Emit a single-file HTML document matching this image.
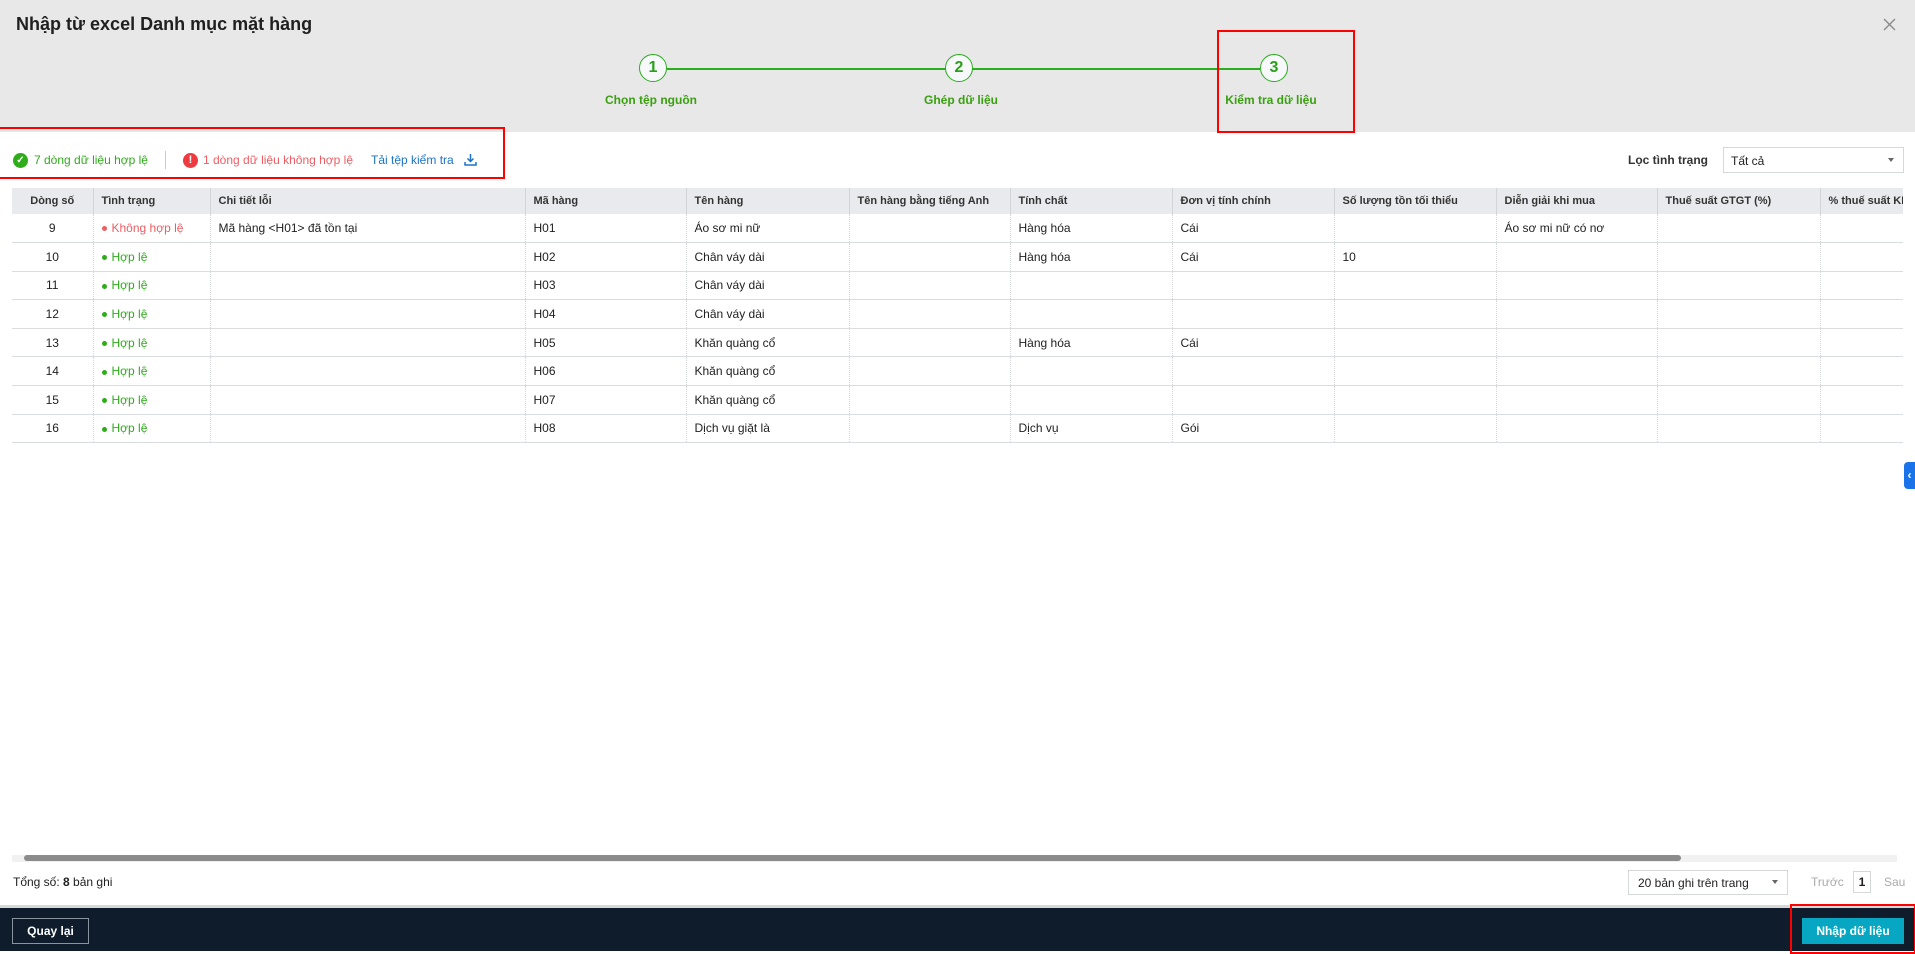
<!DOCTYPE html>
<html><head><meta charset="utf-8"><style>
*{box-sizing:border-box;margin:0;padding:0}
body{width:1915px;height:951px;overflow:hidden;background:#fff;font-family:"Liberation Sans",sans-serif;font-size:12px;color:#212121;position:relative}
.abs{position:absolute}
.hdr{left:0;top:0;width:1915px;height:132px;background:#e8e8e8}
.title{left:16px;top:14px;font-size:18px;font-weight:bold;color:#1f1f1f}
.circ{width:28px;height:28px;border:1.5px solid #2cac1f;border-radius:50%;background:#f6f8fa;color:#2aa01a;font-weight:bold;font-size:16px;text-align:center;line-height:25px}
.lbl{color:#3aa010;font-weight:bold;font-size:12px;white-space:nowrap;transform:translateX(-50%)}
.red{border:2.5px solid #f00}
table{border-collapse:collapse;table-layout:fixed}
th{background:#e9eaed;height:26px;font-size:11px;font-weight:bold;color:#333;text-align:left;padding-left:8px;border-left:1px solid #d2d4d8;white-space:nowrap;overflow:hidden}
td{height:28.6px;padding-left:8px;border-left:1px dotted #d5d7db;border-bottom:1px solid #d9dde2;white-space:nowrap;overflow:hidden;font-size:12px}
th:first-child,td:first-child{border-left:none;text-align:center;padding-left:0}
.ok{color:#2eac1a}.ng{color:#ee5d63}
.dot{display:inline-block;width:5px;height:5px;border-radius:50%;margin-right:5px;vertical-align:middle;background:currentColor}
</style></head><body>
<div class="abs hdr"></div>
<div class="abs title">Nhập từ excel Danh mục mặt hàng</div>
<svg class="abs" style="left:1883px;top:18px" width="13" height="13"><path d="M1 1L12 12M12 1L1 12" stroke="#888" stroke-width="1.3"/></svg>
<div class="abs" style="left:667px;top:68px;width:593px;height:1.5px;background:#2cac1f"></div>
<div class="abs circ" style="left:639px;top:54px">1</div>
<div class="abs circ" style="left:945px;top:54px">2</div>
<div class="abs circ" style="left:1260px;top:54px">3</div>
<div class="abs lbl" style="left:651px;top:93px">Chọn tệp nguồn</div>
<div class="abs lbl" style="left:961px;top:93px">Ghép dữ liệu</div>
<div class="abs lbl" style="left:1271px;top:93px">Kiểm tra dữ liệu</div>
<div class="abs red" style="left:1217px;top:30px;width:138px;height:103px"></div>
<div class="abs red" style="left:-3px;top:127px;width:508px;height:52px"></div>
<div class="abs" style="left:13px;top:153px;width:15px;height:15px;border-radius:50%;background:#2eac1a;color:#fff;font-size:10px;text-align:center;line-height:15px;font-weight:bold">✓</div>
<div class="abs ok" style="left:34px;top:153px">7 dòng dữ liệu hợp lệ</div>
<div class="abs" style="left:165px;top:151px;width:1px;height:18px;background:#ccc"></div>
<div class="abs" style="left:183px;top:153px;width:15px;height:15px;border-radius:50%;background:#ee3b3f;color:#fff;font-size:11px;text-align:center;line-height:15px;font-weight:bold">!</div>
<div class="abs ng" style="left:203px;top:153px">1 dòng dữ liệu không hợp lệ</div>
<div class="abs" style="left:371px;top:153px;color:#1a73c7">Tải tệp kiểm tra</div>
<svg class="abs" style="left:464px;top:153px" width="13" height="13"><path d="M6.5 1V8M3.5 5.5L6.5 8.5 9.5 5.5M1 9V12H12V9" stroke="#1a73c7" stroke-width="1.5" fill="none"/></svg>
<div class="abs" style="left:1628px;top:153px;font-weight:bold;color:#333">Lọc tình trạng</div>
<div class="abs" style="left:1723px;top:147px;width:181px;height:26px;border:1px solid #d5d7da;background:#fff;padding:6px 7px">Tất cả</div>
<div class="abs" style="left:1888px;top:158px;border-left:3.5px solid transparent;border-right:3.5px solid transparent;border-top:4px solid #666"></div>
<div class="abs" style="left:12px;top:188px;width:1891px;overflow:hidden">
<table style="width:2050px">
<colgroup><col style="width:81px"><col style="width:117px"><col style="width:315px"><col style="width:161px"><col style="width:163px"><col style="width:161px"><col style="width:162px"><col style="width:162px"><col style="width:162px"><col style="width:161px"><col style="width:163px"><col style="width:242px"></colgroup>
<tr><th>Dòng số</th><th>Tình trạng</th><th>Chi tiết lỗi</th><th>Mã hàng</th><th>Tên hàng</th><th>Tên hàng bằng tiếng Anh</th><th>Tính chất</th><th>Đơn vị tính chính</th><th>Số lượng tồn tối thiểu</th><th>Diễn giải khi mua</th><th>Thuế suất GTGT (%)</th><th>% thuế suất KHAC</th></tr>
<tr><td>9</td><td class="ng"><span class="dot"></span>Không hợp lệ</td><td>Mã hàng &lt;H01&gt; đã tồn tại</td><td>H01</td><td>Áo sơ mi nữ</td><td></td><td>Hàng hóa</td><td>Cái</td><td></td><td>Áo sơ mi nữ có nơ</td><td></td><td></td></tr>
<tr><td>10</td><td class="ok"><span class="dot"></span>Hợp lệ</td><td></td><td>H02</td><td>Chân váy dài</td><td></td><td>Hàng hóa</td><td>Cái</td><td>10</td><td></td><td></td><td></td></tr>
<tr><td>11</td><td class="ok"><span class="dot"></span>Hợp lệ</td><td></td><td>H03</td><td>Chân váy dài</td><td></td><td></td><td></td><td></td><td></td><td></td><td></td></tr>
<tr><td>12</td><td class="ok"><span class="dot"></span>Hợp lệ</td><td></td><td>H04</td><td>Chân váy dài</td><td></td><td></td><td></td><td></td><td></td><td></td><td></td></tr>
<tr><td>13</td><td class="ok"><span class="dot"></span>Hợp lệ</td><td></td><td>H05</td><td>Khăn quàng cổ</td><td></td><td>Hàng hóa</td><td>Cái</td><td></td><td></td><td></td><td></td></tr>
<tr><td>14</td><td class="ok"><span class="dot"></span>Hợp lệ</td><td></td><td>H06</td><td>Khăn quàng cổ</td><td></td><td></td><td></td><td></td><td></td><td></td><td></td></tr>
<tr><td>15</td><td class="ok"><span class="dot"></span>Hợp lệ</td><td></td><td>H07</td><td>Khăn quàng cổ</td><td></td><td></td><td></td><td></td><td></td><td></td><td></td></tr>
<tr><td>16</td><td class="ok"><span class="dot"></span>Hợp lệ</td><td></td><td>H08</td><td>Dịch vụ giặt là</td><td></td><td>Dịch vụ</td><td>Gói</td><td></td><td></td><td></td><td></td></tr>
</table></div>
<div class="abs" style="left:1904px;top:462px;width:11px;height:27px;background:#1a73e8;border-radius:4px 0 0 4px;color:#fff;font-size:12px;line-height:27px;text-align:center;font-weight:bold">‹</div>
<div class="abs" style="left:12px;top:855px;width:1885px;height:7px;background:#f1f1f1"></div>
<div class="abs" style="left:24px;top:855px;width:1657px;height:6px;background:#8b8b8b;border-radius:3px"></div>
<div class="abs" style="left:13px;top:875px">Tổng số: <b>8</b> bản ghi</div>
<div class="abs" style="left:1628px;top:870px;width:160px;height:25px;border:1px solid #d5d7da;padding:5px 9px">20 bản ghi trên trang</div>
<div class="abs" style="left:1772px;top:880px;border-left:3.5px solid transparent;border-right:3.5px solid transparent;border-top:4px solid #666"></div>
<div class="abs" style="left:1811px;top:875px;color:#aaa">Trước</div>
<div class="abs" style="left:1853px;top:871px;width:18px;height:22px;border:1px solid #d5d7da;text-align:center;line-height:20px;font-weight:bold">1</div>
<div class="abs" style="left:1884px;top:875px;color:#aaa">Sau</div>
<div class="abs" style="left:0;top:905px;width:1915px;height:3px;background:#d8d8d8"></div>
<div class="abs" style="left:0;top:908px;width:1915px;height:43px;background:#0e1c2c"></div>
<div class="abs" style="left:12px;top:918px;width:77px;height:26px;border:1px solid #8a949e;color:#fff;font-weight:bold;text-align:center;line-height:24px">Quay lại</div>
<div class="abs" style="left:1802px;top:918px;width:102px;height:26px;background:#07a6c2;color:#fff;font-weight:bold;text-align:center;line-height:26px">Nhập dữ liệu</div>
<div class="abs red" style="left:1790px;top:904px;width:126px;height:50px"></div>
</body></html>
